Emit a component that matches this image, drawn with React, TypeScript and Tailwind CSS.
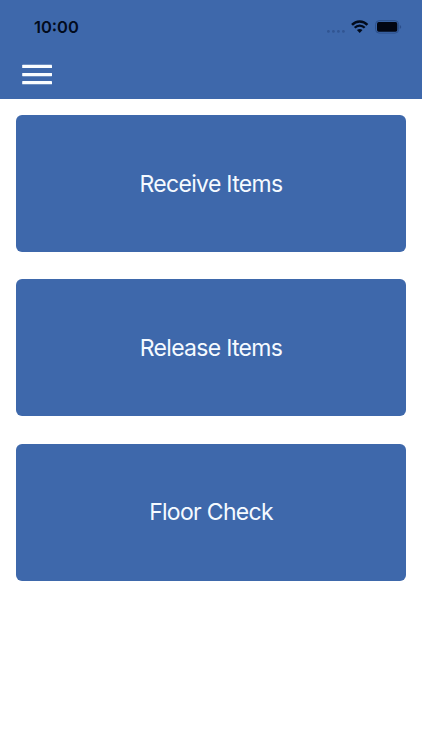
const menuItems = ['Receive Items', 'Release Items', 'Floor Check'];

function StatusBar() {
    return (
        <div className="flex justify-between h-[54px] pl-[34px] pr-[20px]">
            <span className="pt-[15px] text-[16.5px] leading-6 font-semibold text-[#020b1c]">10:00</span>
            <div className="flex pt-[20px]">
                {/* Signal dots */}
                <svg width="20" height="14" viewBox="0 0 20 14" className="mr-[4px]">
                    <g fill="#315592">
                        <circle cx="1.4" cy="11.4" r="1.4" />
                        <circle cx="6.4" cy="11.4" r="1.4" />
                        <circle cx="11.4" cy="11.4" r="1.4" />
                        <circle cx="16.4" cy="11.4" r="1.4" />
                    </g>
                </svg>
                {/* Wifi */}
                <svg width="18" height="14" viewBox="0 0 18 14" className="mr-[6px]" fill="none" stroke="#020b1c">
                    <path d="M1 4.9C5.2 0.3 12.2 0.3 16.4 4.9" strokeWidth="2.5" />
                    <path d="M3.7 7.8C6.4 4.9 11 4.9 13.7 7.8" strokeWidth="2.3" />
                    <path d="M5.9 10.1Q8.7 7.8 11.5 10.1L8.7 13Z" fill="#020b1c" stroke="none" />
                </svg>
                {/* Battery */}
                <svg width="27" height="14" viewBox="0 0 27 14">
                    <rect x="0.6" y="0.7" width="23" height="12.4" rx="3.6" fill="none" stroke="#2c4f8b" strokeWidth="1" />
                    <rect x="2" y="2.1" width="20.3" height="9.7" rx="1.8" fill="#020613" />
                    <path d="M24.8 5Q26.2 5.6 26.2 6.9T24.8 8.8Z" fill="#2c4f8b" />
                </svg>
            </div>
        </div>
    );
}

function Header() {
    return (
        <header className="h-[98.5px] bg-[#3e68ab]">
            <StatusBar />
            <button aria-label="Menu" className="block ml-[22px] mt-[10px]">
                <svg width="31" height="21" viewBox="0 0 31 21" fill="#fafdff">
                    <rect x="0.2" y="0.8" width="29.8" height="3.3" rx="0.4" />
                    <rect x="0.2" y="8.9" width="29.8" height="3.3" rx="0.4" />
                    <rect x="0.2" y="17" width="29.8" height="3.3" rx="0.4" />
                </svg>
            </button>
        </header>
    );
}

function App() {
    return (
        <div className="min-h-screen bg-white font-['Inter',sans-serif]">
            <Header />
            <main className="flex flex-col gap-[27.3px] pt-[16.5px] px-4">
                {menuItems.map((item) => (
                    <button
                        key={item}
                        className="h-[137px] rounded-[6px] bg-[#3e68ab] text-[23px] leading-7 tracking-[-0.7px] text-[#f5faff]"
                    >
                        {item}
                    </button>
                ))}
            </main>
        </div>
    );
}

export default App;
